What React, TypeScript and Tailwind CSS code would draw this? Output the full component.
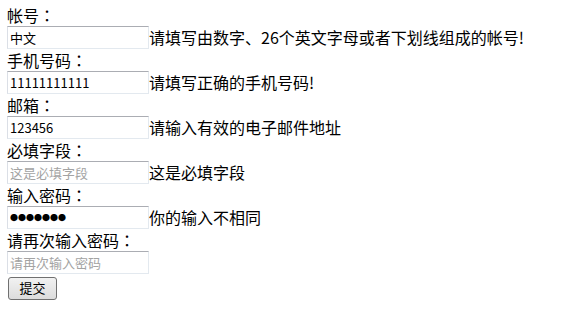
import React from "react";

function Field({
  label,
  value,
  placeholder,
  msg,
  password,
}: {
  label: string;
  value?: string;
  placeholder?: string;
  msg?: string;
  password?: boolean;
}) {
  return (
    <div>
      <div className="h-[22px] pt-[1px] text-[16px] leading-[21px] text-black">
        {label}
        <span className="font-['Noto_Sans_CJK_TC',sans-serif]">：</span>
      </div>
      <div className="flex h-[23px] items-start">
        <input
          readOnly
          value={value ?? ""}
          placeholder={placeholder}
          className={
            password
              ? "box-border h-[23px] w-[142px] shrink-0 border border-[#e3e9ef] border-t-[#abadb3] border-l-[#dbdfe6] bg-white px-[2px] font-['Noto_Sans_CJK_SC',sans-serif] text-[8px] text-black outline-none"
              : "box-border h-[23px] w-[142px] shrink-0 border border-[#e3e9ef] border-t-[#abadb3] border-l-[#dbdfe6] bg-white px-[2px] font-['Noto_Sans_CJK_SC',sans-serif] text-[13px] text-black outline-none placeholder:text-[#a3a3a3]"
          }
        />
        {msg && <span className="text-[16px] leading-[23px] text-black">{msg}</span>}
      </div>
    </div>
  );
}

export default function App() {
  return (
    <div className="min-h-[311px] w-[566px] bg-white pl-[7px] pt-[4px] font-['Noto_Sans_CJK_SC','Noto_Sans',sans-serif]">
      <Field label="帐号" value="中文" msg="请填写由数字、26个英文字母或者下划线组成的帐号!" />
      <Field label="手机号码" value="11111111111" msg="请填写正确的手机号码!" />
      <Field label="邮箱" value="123456" msg="请输入有效的电子邮件地址" />
      <Field label="必填字段" placeholder="这是必填字段" msg="这是必填字段" />
      <Field label="输入密码" value="●●●●●●●" msg="你的输入不相同" password />
      <Field label="请再次输入密码" placeholder="请再次输入密码" />
      <div>
        <button className="ml-[1px] box-border h-[23px] w-[49px] rounded-[3px] border border-[#707070] bg-gradient-to-b from-[#f2f2f2] to-[#dcdcdc] font-['Noto_Sans_CJK_SC',sans-serif] text-[13px] leading-[20px] text-black">
          提交
        </button>
      </div>
    </div>
  );
}
